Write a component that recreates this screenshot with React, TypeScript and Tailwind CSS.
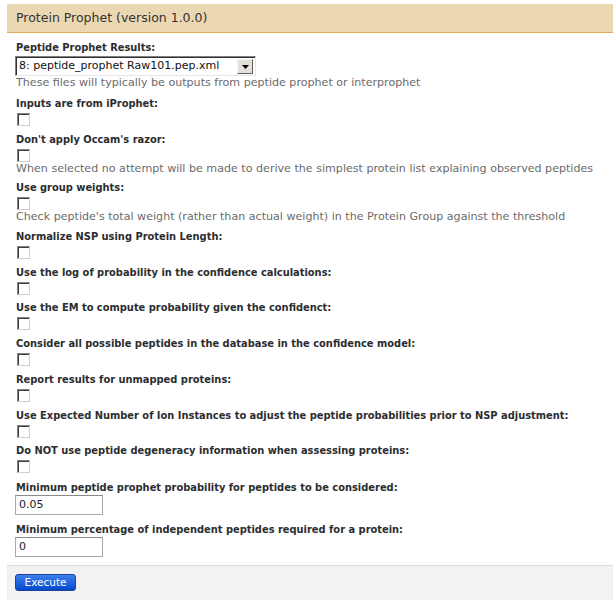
import React from "react";

const checkRows: { label: string; help?: string }[] = [
  { label: "Inputs are from iProphet:" },
  {
    label: "Don't apply Occam's razor:",
    help: "When selected no attempt will be made to derive the simplest protein list explaining observed peptides",
  },
  {
    label: "Use group weights:",
    help: "Check peptide's total weight (rather than actual weight) in the Protein Group against the threshold",
  },
  { label: "Normalize NSP using Protein Length:" },
  { label: "Use the log of probability in the confidence calculations:" },
  { label: "Use the EM to compute probability given the confidenct:" },
  { label: "Consider all possible peptides in the database in the confidence model:" },
  { label: "Report results for unmapped proteins:" },
  { label: "Use Expected Number of Ion Instances to adjust the peptide probabilities prior to NSP adjustment:" },
  { label: "Do NOT use peptide degeneracy information when assessing proteins:" },
];

function Label({ children }: { children: React.ReactNode }) {
  return (
    <label className="block pl-[1px] font-bold text-[9.9px] leading-[15px] text-[#2b2d30] whitespace-nowrap">
      {children}
    </label>
  );
}

function Help({ children }: { children: React.ReactNode }) {
  return <div className="pl-[1px] text-[11.1px] leading-[13px] text-[#6b6b6b] whitespace-nowrap">{children}</div>;
}

function Check() {
  return (
    <input
      type="checkbox"
      className="block appearance-none ml-[2px] mt-[2px] w-[13px] h-[13px] bg-white border border-t-[#808080] border-l-[#808080] border-r-[#d4d0c8] border-b-[#d4d0c8] shadow-[inset_1px_1px_0_#404040]"
    />
  );
}

function TextBox({ value }: { value: string }) {
  return (
    <input
      type="text"
      defaultValue={value}
      className="block w-[88px] h-[20px] pl-[3px] text-[11px] text-[#222] bg-white border border-[#a7a7a7] border-t-[#8a8a8a] outline-none [font-family:'DejaVu_Sans',Verdana,sans-serif]"
    />
  );
}

export default function App() {
  return (
    <div className="w-[613px] h-[607px] bg-white overflow-hidden [font-family:'DejaVu_Sans',Verdana,sans-serif]">
      <div className="pl-[7px] pt-[4px]">
        <div className="h-[29px] pl-[9px] flex items-center bg-[#ebd8b2] border-b border-[#d9ab5a] text-[12.5px] text-[#333] whitespace-nowrap">
          Protein Prophet (version 1.0.0)
        </div>

        <div className="pl-[8px] pt-[7px]">
          <div className="pb-[7px]">
            <Label>Peptide Prophet Results:</Label>
            <div className="mt-[1px] w-[241px] h-[20px] flex items-center bg-white border border-t-[#808080] border-l-[#808080] border-r-[#e6e6e6] border-b-[#e6e6e6] shadow-[inset_1px_1px_0_#303030]">
              <span className="pl-[3px] pt-[1px] text-[11px] text-[#111] whitespace-nowrap">
                8: peptide_prophet Raw101.pep.xml
              </span>
              <span className="ml-auto mr-[2px] mt-[1px] w-[16px] h-[15px] flex items-center justify-center bg-[#e4e1da] border border-t-[#f4f4f4] border-l-[#f4f4f4] border-r-[#5a5a5a] border-b-[#5a5a5a]">
                <svg width="7" height="4" viewBox="0 0 7 4">
                  <path d="M0 0 H7 L3.5 4 Z" fill="#000" />
                </svg>
              </span>
            </div>
            <Help>These files will typically be outputs from peptide prophet or interprophet</Help>
          </div>

          {checkRows.map((r) => (
            <div key={r.label} className="pb-[5.7px]">
              <Label>{r.label}</Label>
              <Check />
              {r.help && <Help>{r.help}</Help>}
            </div>
          ))}

          <div className="pt-[1px] pb-[7px]">
            <Label>Minimum peptide prophet probability for peptides to be considered:</Label>
            <TextBox value="0.05" />
          </div>
          <div className="pb-[8px]">
            <Label>Minimum percentage of independent peptides required for a protein:</Label>
            <TextBox value="0" />
          </div>
        </div>

        <div className="h-[35px] pl-[8px] pt-[8px] bg-[#f2f2f2] border-t border-[#dcdcdc]">
          <button
            type="button"
            className="block w-[61px] h-[17px] rounded-[3px] border border-[#1d3f94] bg-gradient-to-b from-[#3d7fee] to-[#0049cc] text-white text-[10.5px] leading-[15px] [font-family:'DejaVu_Sans',Verdana,sans-serif]"
          >
            Execute
          </button>
        </div>
      </div>
    </div>
  );
}
